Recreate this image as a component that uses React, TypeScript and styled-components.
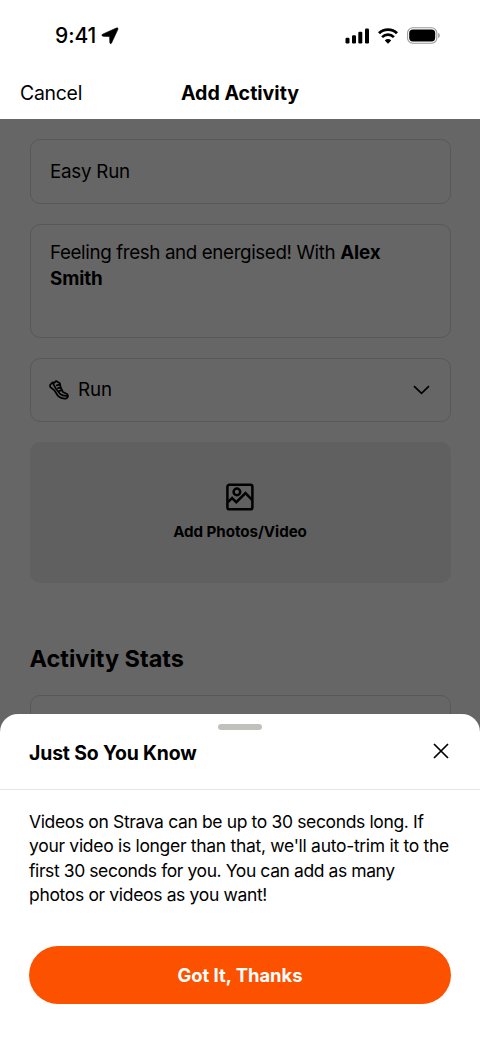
import React from 'react';
import styled, { createGlobalStyle } from 'styled-components';

const GlobalStyle = createGlobalStyle`
  * { box-sizing: border-box; }
  body { margin: 0; background: #fff; }
`;

const Screen = styled.div`
  width: 480px;
  height: 1040px;
  display: flex;
  flex-direction: column;
  position: relative;
  overflow: hidden;
  background: #fff;
  color: #000;
  font-family: Inter, 'Liberation Sans', sans-serif;
`;

const StatusBar = styled.div`
  height: 66px;
  flex: none;
  display: flex;
  justify-content: space-between;
  align-items: center;
  padding: 5px 40px 0 55px;
`;

const Cluster = styled.div<{ $gap: number }>`
  display: flex;
  align-items: center;
  gap: ${(p) => p.$gap}px;
`;

const Label = styled.span<{ $size: number; $weight?: number; $spacing?: number }>`
  font-size: ${(p) => p.$size}px;
  font-weight: ${(p) => p.$weight ?? 400};
  letter-spacing: ${(p) => p.$spacing ?? 0}px;
  line-height: 26px;
  white-space: nowrap;
`;

const NavBar = styled.header`
  height: 53px;
  flex: none;
  display: grid;
  grid-template-columns: 1fr auto 1fr;
  align-items: center;
  padding: 0 20px;
`;

const TextButton = styled.button`
  border: 0;
  padding: 0;
  background: none;
  color: inherit;
  font: inherit;
  text-align: left;
`;

const Form = styled.main`
  flex: 1;
  position: relative;
  padding: 20px 29.5px 0;
  display: flex;
  flex-direction: column;
`;

const Scrim = styled.div`
  position: absolute;
  inset: 0;
  background: rgba(0, 0, 0, 0.6);
`;

const Field = styled.div<{ $height: number; $top?: boolean; $inset?: number }>`
  height: ${(p) => p.$height}px;
  flex: none;
  margin-bottom: 20px;
  padding: ${(p) => (p.$top ? 15 : 0)}px 19.5px 0 ${(p) => p.$inset ?? 19.5}px;
  border: 1.5px solid #dcdcdc;
  border-radius: 10px;
  display: flex;
  align-items: ${(p) => (p.$top ? 'flex-start' : 'center')};
`;

const Note = styled.p`
  margin: 0;
  font-size: 18.8px;
  line-height: 26px;
  letter-spacing: -0.38px;

  b {
    letter-spacing: -0.1px;
  }
`;

const Upload = styled.div`
  height: 141px;
  flex: none;
  border-radius: 10px;
  background: #f0f0f0;
  display: flex;
  flex-direction: column;
  align-items: center;
  padding-top: 41px;
  gap: 8px;
`;

const SectionTitle = styled.h2`
  margin: 58.5px 0 20px;
  height: 33px;
  font-size: 23.5px;
  line-height: 33px;
  font-weight: 700;
`;

const Sheet = styled.section`
  position: absolute;
  left: 0;
  right: 0;
  bottom: 0;
  height: 326.5px;
  background: #fff;
  border-radius: 18px 18px 0 0;
  display: flex;
  flex-direction: column;
`;

const Handle = styled.div`
  width: 44px;
  height: 6px;
  flex: none;
  margin: 10px auto 0;
  border-radius: 3px;
  background: #c1c1bc;
`;

const SheetHeader = styled.div`
  height: 60.5px;
  flex: none;
  display: flex;
  justify-content: space-between;
  align-items: flex-start;
  padding: 10px 31px 0 29px;
  border-bottom: 1px solid #e4e4e4;

  svg {
    margin-top: 3px;
  }
`;

const Message = styled.p`
  margin: 20px 20px 0 29px;
`;

const Line = styled.span<{ $spacing: number }>`
  display: block;
  font-size: 17.5px;
  line-height: 24.4px;
  letter-spacing: ${(p) => p.$spacing}px;
  white-space: nowrap;
`;

const Primary = styled.button`
  margin: 38px 29px 0;
  height: 58px;
  flex: none;
  border: 0;
  padding: 0;
  border-radius: 29px;
  background: #fc5200;
  color: #fff;
  font-family: inherit;
`;

const Spacer = styled.div`
  flex: 1;
`;

const LocationIcon = () => (
  <svg width="18" height="18" viewBox="0 0 18 18" stroke="#000" strokeWidth="0.6">
    <path d="M1.6 7.2 15.4 1Q17.6.4 16.8 2.6L10.6 15.9Q9.3 17.8 8.8 15.6L8.6 9.6 2 9.3Q-.2 8.3 1.6 7.2Z" />
  </svg>
);

const SignalIcon = () => (
  <svg width="25" height="16" viewBox="0 0 25 16">
    <rect x="0.5" y="9.8" width="4" height="5.7" rx="1.2" />
    <rect x="7" y="7.2" width="4" height="8.3" rx="1.2" />
    <rect x="13.3" y="3.8" width="4" height="11.7" rx="1.2" />
    <rect x="20" y="0.5" width="4" height="15" rx="1.2" />
  </svg>
);

const WifiIcon = () => (
  <svg width="20" height="16" viewBox="0 0 20 16" fill="none" stroke="#000">
    <path d="M1 5.3a12.8 12.8 0 0 1 18 0" strokeWidth="2.9" />
    <path d="M4.1 9.1a8.5 8.5 0 0 1 11.8 0" strokeWidth="2.7" />
    <path d="M10 15.7 6.8 12.4a4.6 4.6 0 0 1 6.4 0Z" fill="#000" stroke="none" />
  </svg>
);

const BatteryIcon = () => (
  <svg width="33" height="17" viewBox="0 0 33 17">
    <rect x="0.6" y="0.8" width="29.2" height="15.4" rx="5" fill="none" stroke="#999" strokeWidth="1.1" />
    <rect x="2.2" y="2.6" width="26" height="11.8" rx="3.6" />
    <path d="M31.2 5.8q1.6.7 1.6 2.7t-1.6 2.7z" fill="#999" />
  </svg>
);

const ShoeIcon = () => (
  <svg width="20" height="20" viewBox="0 0 20 20" fill="none" stroke="#000" strokeWidth="1.7" strokeLinejoin="round" strokeLinecap="round">
    <path d="M1 5 3.6 2.4 5.2 2.8 7.2 1 10.8 3.2 11.9 8.2 14 12 18.4 14.2Q19.8 17.4 17.3 18.4 12.5 19.2 9.2 16.2L5.3 10.3 1.2 6.8Z" />
    <path d="M3.8 3.2 7.3 9.3 11.2 14Q14 16.4 18.6 15.8M7.8 5.3 10.8 4.6M9 8.2 11.7 7.6M10.5 10.9 13 10.1" />
  </svg>
);

const ChevronIcon = () => (
  <svg width="17" height="10" viewBox="0 0 17 10" fill="none" stroke="#000" strokeWidth="1.7">
    <path d="M1 1.2 8.5 8.4 16 1.2" />
  </svg>
);

const PhotoIcon = () => (
  <svg width="28" height="28" viewBox="0 0 28 28" fill="none" stroke="#000" strokeWidth="2.5">
    <rect x="1.4" y="1.7" width="25" height="24.6" rx="2" />
    <circle cx="10.9" cy="8.9" r="3.3" />
    <path d="M2 19.2 6.1 15 10.3 19.2 19.5 10.1 26 16.8" />
  </svg>
);

const CloseIcon = () => (
  <svg width="16" height="16" viewBox="0 0 16 16" fill="none" stroke="#000" strokeWidth="1.7">
    <path d="M1 1 15 15M15 1 1 15" />
  </svg>
);

export default function App() {
  return (
    <Screen>
      <GlobalStyle />
      <StatusBar>
        <Cluster $gap={4.5}>
          <Label $size={21} $weight={500} $spacing={-0.1}>9:41</Label>
          <LocationIcon />
        </Cluster>
        <Cluster $gap={9}>
          <Cluster $gap={8}>
            <SignalIcon />
            <WifiIcon />
          </Cluster>
          <BatteryIcon />
        </Cluster>
      </StatusBar>
      <NavBar>
        <TextButton><Label $size={19.4} $spacing={-0.25}>Cancel</Label></TextButton>
        <Label $size={19.6} $weight={700}>Add Activity</Label>
      </NavBar>
      <Form>
        <Field $height={65}><Label $size={18.8} $spacing={-0.25}>Easy Run</Label></Field>
        <Field $height={113.5} $top>
          <Note>Feeling fresh and energised! With <b>Alex<br />Smith</b></Note>
        </Field>
        <Field $height={64.5} $inset={18}>
          <Cluster $gap={9.5}>
            <ShoeIcon />
            <Label $size={18.8} $spacing={-0.1}>Run</Label>
          </Cluster>
          <Spacer />
          <ChevronIcon />
        </Field>
        <Upload>
          <PhotoIcon />
          <Label $size={15.2} $weight={700} $spacing={-0.08}>Add Photos/Video</Label>
        </Upload>
        <SectionTitle>Activity Stats</SectionTitle>
        <Field $height={65} />
        <Scrim />
      </Form>
      <Sheet>
        <Handle />
        <SheetHeader>
          <Label $size={19.4} $weight={700} $spacing={-0.14}>Just So You Know</Label>
          <CloseIcon />
        </SheetHeader>
        <Message>
          <Line $spacing={-0.36}>Videos on Strava can be up to 30 seconds long. If </Line>
          <Line $spacing={-0.3}>your video is longer than that, we'll auto-trim it to the </Line>
          <Line $spacing={-0.41}>first 30 seconds for you. You can add as many </Line>
          <Line $spacing={-0.34}>photos or videos as you want!</Line>
        </Message>
        <Primary><Label $size={18.4} $weight={700}>Got It, Thanks</Label></Primary>
      </Sheet>
    </Screen>
  );
}
